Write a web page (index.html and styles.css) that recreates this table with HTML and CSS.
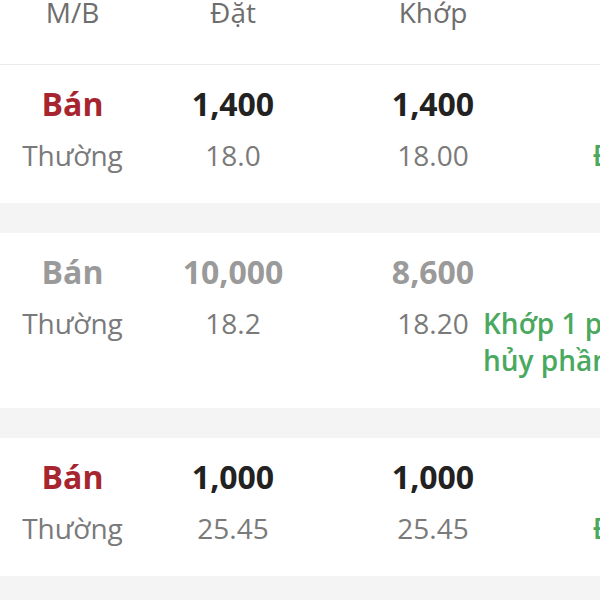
FILE: index.html
```html
<!DOCTYPE html>
<html lang="vi">
<head>
<meta charset="utf-8">
<title>Sổ lệnh</title>
<link rel="stylesheet" href="styles.css">
</head>
<body>
<div class="viewport">
  <div class="table">
    <div class="thead">
      <div class="cell">M/B</div>
      <div class="cell">Đặt</div>
      <div class="cell col3">Khớp</div>
      <div class="cell"></div>
    </div>

    <div class="order">
      <div class="cell big sell">Bán</div>
      <div class="cell big">1,400</div>
      <div class="cell big col3">1,400</div>
      <div class="cell"></div>
      <div class="cell small">Thường</div>
      <div class="cell small">18.0</div>
      <div class="cell small col3">18.00</div>
      <div class="cell status">Đã khớp</div>
    </div>

    <div class="order muted">
      <div class="cell big sell">Bán</div>
      <div class="cell big">10,000</div>
      <div class="cell big col3">8,600</div>
      <div class="cell"></div>
      <div class="cell small">Thường</div>
      <div class="cell small">18.2</div>
      <div class="cell small col3">18.20</div>
      <div class="cell status multi">Khớp 1 phần,<br>hủy phần còn lại</div>
    </div>

    <div class="order">
      <div class="cell big sell">Bán</div>
      <div class="cell big">1,000</div>
      <div class="cell big col3">1,000</div>
      <div class="cell"></div>
      <div class="cell small">Thường</div>
      <div class="cell small">25.45</div>
      <div class="cell small col3">25.45</div>
      <div class="cell status">Đã khớp</div>
    </div>
  </div>
</div>
</body>
</html>
```
FILE: styles.css
```css
html, body {
  margin: 0;
  padding: 0;
  background: #f4f4f4;
  overflow: hidden;
}

.viewport {
  width: 600px;
  height: 600px;
  overflow: hidden;
  font-family: "Open Sans", "Noto Sans", sans-serif;
}

.table {
  width: 816px;
  min-height: 600px;
  display: flex;
  flex-direction: column;
  gap: 30px;
  background: #f4f4f4;
}

.thead,
.order {
  display: grid;
  grid-template-columns: 145px 176px 162px 333px;
  background: #ffffff;
}

.thead {
  height: 64px;
  align-items: start;
  border-bottom: 1px solid #ebebeb;
  margin-bottom: -30px;
}

.thead .cell {
  font-size: 28px;
  line-height: 24px;
  padding-top: 0;
  color: #6e6e6e;
}

.cell {
  text-align: center;
  white-space: nowrap;
}

.col3 {
  padding-left: 62px;
}

.order {
  padding: 17px 0 30px;
  row-gap: 11px;
  grid-template-rows: 44px auto;
}

.big {
  font-size: 32px;
  line-height: 44px;
  font-weight: 700;
  color: #222222;
}

.big.sell {
  color: #a6252f;
}

.small {
  font-size: 28px;
  line-height: 36px;
  color: #7a7a7a;
}

.status {
  font-size: 28px;
  line-height: 36px;
  font-weight: 600;
  color: #4aa95f;
}

.status.multi {
  text-align: left;
  line-height: 36.5px;
}

.muted .big,
.muted .big.sell {
  color: #9a9a9a;
}
```
